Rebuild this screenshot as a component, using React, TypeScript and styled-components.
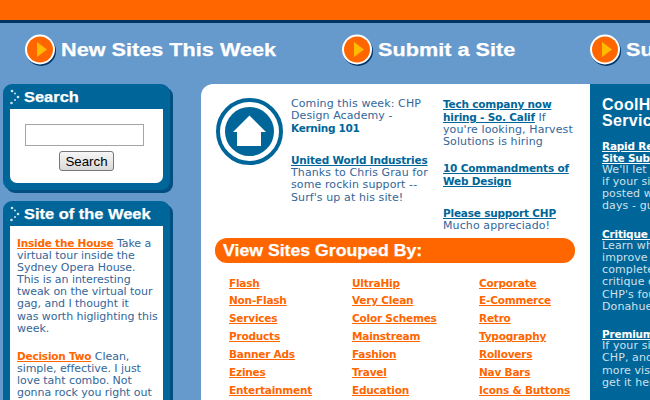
import React from "react";
import styled, { createGlobalStyle } from "styled-components";

const Global = createGlobalStyle`
  html, body { margin: 0; padding: 0; background: #6699cc; overflow: hidden; }
  body { font-family: "DejaVu Sans", Verdana, sans-serif; font-size: 11px; line-height: 12.1px; letter-spacing: 0.1px; color: #336699; }
  b { font-size: 10.5px; letter-spacing: -0.3px; color: #006699; }
`;
const Page = styled.div`width: 650px; height: 400px; overflow: hidden; background: #6699cc;`;
const Top = styled.div`height: 20px; background: #ff6600; border-bottom: 3px solid #003366;`;
const Nav = styled.nav`height: 61px; box-sizing: border-box; display: flex; align-items: flex-start; padding: 11px 0 0 25px; width: 900px;`;
const NavItem = styled.a<{ $w: number }>`
  width: ${(p) => p.$w}px; flex: none; display: flex; align-items: center; gap: 5px; color: #fff; white-space: nowrap;
`;
const Wide = styled.span<{ $size: number; $scale: number }>`
  display: inline-block; transform: scaleX(${(p) => p.$scale}); transform-origin: left center;
  font: bold ${(p) => p.$size}px "Liberation Sans", Arial, sans-serif; letter-spacing: 0; white-space: nowrap;
  -webkit-text-stroke: 0.25px currentColor;
`;
const Main = styled.div`display: flex; align-items: flex-start; width: 900px; height: 316px;`;
const Side = styled.aside`width: 167px; margin: 0 31px 0 3px; flex: none; display: flex; flex-direction: column; gap: 11px;`;
const Box = styled.section`
  background: #006699; border-radius: 9px; box-shadow: 3px 3px 0 #004f80; padding: 0 7px 7px;
`;
const BoxTitle = styled.h2`
  height: 25px; margin: 0; display: flex; align-items: center; gap: 4px; margin-left: -1px; color: #fff;
`;
const BoxBody = styled.div<{ $center?: boolean }>`
  background: #fff; border-radius: 0 0 7px 7px; padding: ${(p) => (p.$center ? "15px 0 12px" : "11px 0 10px 7px")};
  ${(p) => p.$center && "display:flex;flex-direction:column;align-items:center;gap:5px;"}
`;
const SearchInput = styled.input`
  width: 119px; height: 22px; box-sizing: border-box; border: 1px solid #a5a5a5; background: #fff; padding: 0; margin: 0 0 0 -4px;
`;
const SearchBtn = styled.button`
  width: 55px; height: 20px; padding: 0; box-sizing: border-box; border: 1px solid #777; border-radius: 3px;
  background: linear-gradient(#f6f6f6, #d9d9d9); color: #000; font: 13.3px "Liberation Sans", Arial, sans-serif;
`;
const Para = styled.p`margin: 0 0 15px; white-space: nowrap; letter-spacing: -0.05px; &:last-child { margin: 0; }`;
const linkFont = `font-size: 10.5px; letter-spacing: -0.2px; font-weight: bold; text-decoration: underline;`;
const OLink = styled.a`color: #ff6600; ${linkFont}`;
const BLink = styled.a`color: #006699; ${linkFont}`;
const WLink = styled.a`color: #fff; ${linkFont} display: block;`;
const Content = styled.main`
  width: 389px; height: 316px; flex: none; background: #fff; border-radius: 12px 0 0 0; box-sizing: border-box; padding: 14px 15px 0 14px;
`;
const News = styled.div`display: flex; height: 140px; margin-left: 1px;`;
const HomeWrap = styled.div`width: 75px; flex: none;`;
const NewsCol = styled.div<{ $w: number }>`width: ${(p) => p.$w}px; flex: none; white-space: nowrap;`;
const Spaced = styled.p<{ $gap: number }>`margin: 0 0 ${(p) => p.$gap}px;`;
const Bar = styled.h3`
  margin: 0 0 13.5px; height: 25px; width: 360px; box-sizing: border-box; background: #ff6600; border-radius: 12px; padding: 0 8px;
  display: flex; align-items: center; color: #fff;
`;
const Links = styled.div`display: grid; grid-template-columns: 123px 127px 1fr; padding-left: 14px; row-gap: 5.9px;`;
const Right = styled.aside`
  width: 300px; height: 316px; flex: none; background: #006699; color: #cfe0ec; padding: 13px 0 0 12px; box-sizing: border-box;
`;
const RightTitle = styled.h2`
  margin: 0 0 11px; color: #fff; font: bold 16px/16px "Liberation Sans", Arial, sans-serif; letter-spacing: 0.3px;
`;
const RightPara = styled.p`margin: 0 0 15.5px; width: 130px;`;

const Play = () => (
  <svg width="31" height="32" viewBox="0 0 31 32">
    <circle cx="16" cy="17" r="15" fill="#003366" />
    <circle cx="15" cy="15.5" r="15" fill="#fff" />
    <circle cx="15" cy="15.5" r="13" fill="#ff6600" />
    <path d="M12 8 L22 15.5 L12 23 Z" fill="#ffbb00" />
  </svg>
);
const Dots = () => (
  <svg width="11" height="16" viewBox="0 0 11 16">
    <g fill="#cfe3f0">
      <circle cx="3" cy="2" r="1.3" /><circle cx="6" cy="4.5" r="1" /><circle cx="9" cy="8" r="1.3" />
      <circle cx="6" cy="11" r="1" /><circle cx="2.5" cy="14" r="1.3" />
    </g>
  </svg>
);
const Home = () => (
  <svg width="67" height="67" viewBox="0 0 67 67">
    <circle cx="33.5" cy="33.5" r="31.5" fill="none" stroke="#006699" strokeWidth="4" />
    <circle cx="33.5" cy="33.5" r="24.5" fill="#006699" />
    <path d="M33.5 17.5 L50 34 H45 V48 H21 V34 H17 Z" fill="#fff" />
  </svg>
);

const cols = [
  ["Flash", "UltraHip", "Corporate"],
  ["Non-Flash", "Very Clean", "E-Commerce"],
  ["Services", "Color Schemes", "Retro"],
  ["Products", "Mainstream", "Typography"],
  ["Banner Ads", "Fashion", "Rollovers"],
  ["Ezines", "Travel", "Nav Bars"],
  ["Entertainment", "Education", "Icons & Buttons"],
];

export default function App() {
  return (
    <Page>
      <Global />
      <Top />
      <Nav>
        <NavItem $w={317}><Play /><Wide $size={19} $scale={1.14}>New Sites This Week</Wide></NavItem>
        <NavItem $w={248}><Play /><Wide $size={19} $scale={1.14}>Submit a Site</Wide></NavItem>
        <NavItem $w={300}><Play /><Wide $size={19} $scale={1.14}>Submit a Site</Wide></NavItem>
      </Nav>
      <Main>
        <Side>
          <Box>
            <BoxTitle><Dots /><Wide $size={15.5} $scale={1.06}>Search</Wide></BoxTitle>
            <BoxBody $center>
              <SearchInput />
              <SearchBtn>Search</SearchBtn>
            </BoxBody>
          </Box>
          <Box>
            <BoxTitle><Dots /><Wide $size={15.5} $scale={1.06}>Site of the Week</Wide></BoxTitle>
            <BoxBody>
              <Para><OLink>Inside the House</OLink> Take a<br />virtual tour inside the<br />Sydney Opera House.<br />This is an interesting<br />tweak on the virtual tour<br />gag, and I thought it<br />was worth higlighting this<br />week.</Para>
              <Para><OLink>Decision Two</OLink> Clean,<br />simple, effective. I just<br />love taht combo. Not<br />gonna rock you right out<br />of your seat, but the</Para>
            </BoxBody>
          </Box>
        </Side>
        <Content>
          <News>
            <HomeWrap><Home /></HomeWrap>
            <NewsCol $w={152}>
              <Spaced $gap={19}>Coming this week: CHP<br />Design Academy -<br /><b>Kerning 101</b></Spaced>
              <Spaced $gap={0}><BLink>United World Industries</BLink><br />Thanks to Chris Grau for<br />some rockin support --<br />Surf's up at his site!</Spaced>
            </NewsCol>
            <NewsCol $w={135}>
              <Spaced $gap={14}><BLink>Tech company now<br />hiring - So. Calif</BLink> If<br />you're looking, Harvest<br />Solutions is hiring</Spaced>
              <Spaced $gap={18}><BLink>10 Commandments of<br />Web Design</BLink></Spaced>
              <Spaced $gap={0}><BLink>Please support CHP</BLink><br />Mucho appreciado!</Spaced>
            </NewsCol>
          </News>
          <Bar><Wide $size={17} $scale={1.04}>View Sites Grouped By:</Wide></Bar>
          <Links>
            {cols.flat().map((t) => <OLink key={t}>{t}</OLink>)}
          </Links>
        </Content>
        <Right>
          <RightTitle>CoolHomepages<br />Services</RightTitle>
          <RightPara><WLink>Rapid Review<br />Site Submission</WLink>We'll let you know<br />if your site will be<br />posted within 2<br />days - guaranteed</RightPara>
          <RightPara><WLink>Critique Team</WLink>Learn where to<br />improve with a<br />complete site<br />critique of your site<br />CHP's founder<br />Donahue</RightPara>
          <RightPara><WLink>Premium Listing</WLink>If your site is on<br />CHP, and you want<br />more visibility,<br />get it here</RightPara>
        </Right>
      </Main>
    </Page>
  );
}
